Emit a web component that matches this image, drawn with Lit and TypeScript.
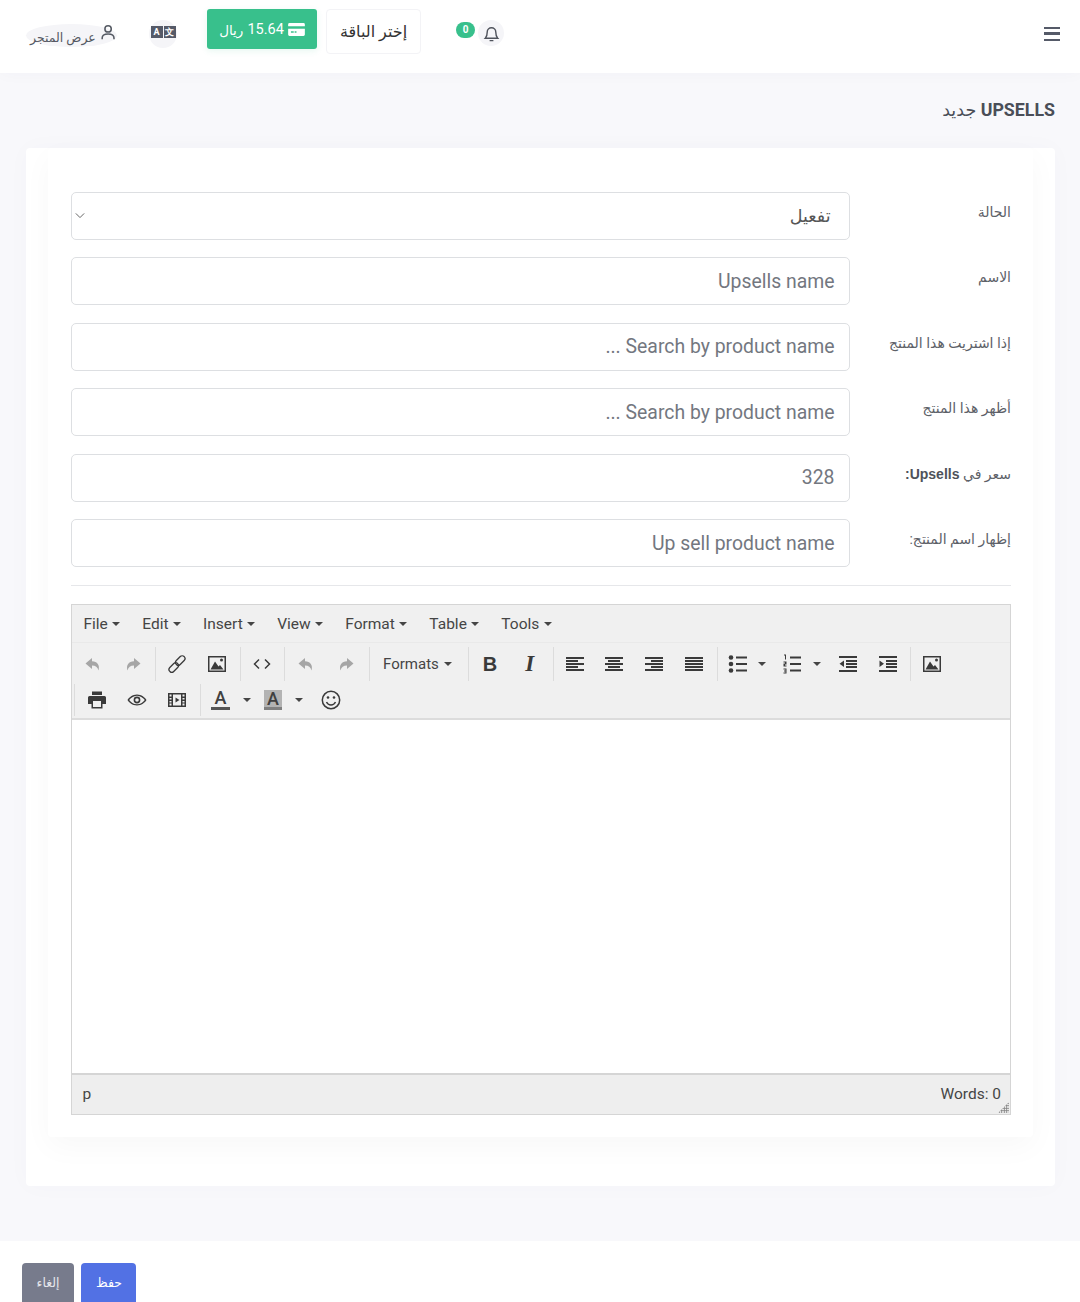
import { LitElement, html, css, svg } from "lit";
import { customElement } from "lit/decorators.js";

const I: Record<string, unknown> = {
  undo: svg`<path d="M9 4 2.5 9.5 9 15v-3.600c3.600 0 5.600 1.500 6.500 5.100 1.600-5.400-1.200-9-6.500-9.200z"/>`,
  redo: svg`<path d="M11 4l6.500 5.500L11 15v-3.600c-3.600 0-5.600 1.500-6.500 5.100C2.900 11.100 5.700 7.500 11 7.300z"/>`,
  link: svg`<g fill="none" stroke="currentColor" stroke-width="1.300"><rect x="10.500" y="1" width="5.500" height="11" rx="2.700" transform="rotate(45 13.250 6.500)"/><rect x="4" y="8" width="5.500" height="11" rx="2.700" transform="rotate(45 6.750 13.500)"/></g>`,
  image: svg`<path fill-rule="evenodd" d="M1 2h18v16H1zm1.500 1.500v13h15v-13z"/><path d="M3.500 15.500 8 7.500l3.500 5 1.500-1.500 3.500 4.500z"/><circle cx="14.500" cy="6" r="1.500"/>`,
  code: svg`<path fill="none" stroke="currentColor" stroke-width="1.500" d="M7 5.500 2.500 10 7 14.500M13 5.500l4.500 4.500-4.500 4.500"/>`,
  left: svg`<path d="M1 3h18v2H1zM1 6h12v2H1zM1 9h18v2H1zM1 12h12v2H1zM1 15h18v2H1z"/>`,
  center: svg`<path d="M1 3h18v2H1zM4 6h12v2H4zM1 9h18v2H1zM4 12h12v2H4zM1 15h18v2H1z"/>`,
  right: svg`<path d="M1 3h18v2H1zM7 6h12v2H7zM1 9h18v2H1zM7 12h12v2H7zM1 15h18v2H1z"/>`,
  justify: svg`<path d="M1 3h18v2H1zM1 6h18v2H1zM1 9h18v2H1zM1 12h18v2H1zM1 15h18v2H1z"/>`,
  bullist: svg`<circle cx="3" cy="3.500" r="2.300"/><circle cx="3" cy="10" r="2.300"/><circle cx="3" cy="16.500" r="2.300"/><path d="M8 2.500h11v2H8zM8 9h11v2H8zM8 15.500h11v2H8z"/>`,
  numlist: svg`<path d="M2 .5h2v5H3V1.500H2zM1.500 7.500h3v3H3v1h1.500v1h-3v-3H3v-1H1.500zM1.500 14.500h3v5h-3v-1H3.500v-1H2v-1h1.500v-1h-2z"/><path d="M8 2.500h11v2H8zM8 9h11v2H8zM8 15.500h11v2H8z"/>`,
  outdent: svg`<path d="M1 2h18v2H1zM8 6h11v2H8zM8 9h11v2H8zM8 12h11v2H8zM1 16h18v2H1zM6 6.500v6.500L1.500 9.800z"/>`,
  indent: svg`<path d="M1 2h18v2H1zM8 6h11v2H8zM8 9h11v2H8zM8 12h11v2H8zM1 16h18v2H1zM1.500 6.500v6.500L6 9.800z"/>`,
  print: svg`<path d="M5 1.500h10V5H5z"/><path fill-rule="evenodd" d="M2.500 6h15A1.500 1.500 0 0 1 19 7.500V14h-3.500v4.500h-11V14H1V7.500A1.500 1.500 0 0 1 2.500 6zM6 11v6h8v-6z"/>`,
  eye: svg`<path fill-rule="evenodd" d="M10 4.500c4.500 0 8 3 9.500 5.500-1.500 2.500-5 5.500-9.500 5.500S2 12.500.5 10C2 7.500 5.500 4.500 10 4.500zM2.200 10c1.500 2 4.300 4.300 7.800 4.300s6.300-2.300 7.800-4.300c-1.500-2-4.300-4.300-7.800-4.300S3.700 8 2.200 10z"/><path fill-rule="evenodd" d="M10 6.600a3.400 3.400 0 1 1 0 6.800 3.400 3.400 0 0 1 0-6.800zm0 1.600a1.800 1.800 0 1 0 0 3.600 1.800 1.800 0 0 0 0-3.600z"/>`,
  film: svg`<path fill-rule="evenodd" d="M1 3h18v14H1zM2.500 4.500v2h2v-2zm0 3.500v1.500h2V8zm0 3v1.500h2V11zm0 2.500v2h2v-2zM6 4.500v11h8v-11zm9.500 0v2h2v-2zm0 3.500v1.500h2V8zm0 3v1.500h2V11zm0 2.500v2h2v-2z"/><path d="M8.500 7.500 12.500 10l-4 2.500z"/>`,
  smile: svg`<g fill="none" stroke="currentColor" stroke-width="1.500"><circle cx="10" cy="10" r="8.700"/><path d="M5.500 12c1 2 2.600 3 4.500 3s3.500-1 4.500-3"/></g><circle cx="7" cy="7.500" r="1.300"/><circle cx="13" cy="7.500" r="1.300"/>`,
};

const ico = (n: string, dim = false) =>
  html`<span class="btn ${dim ? "dim" : ""}"><svg viewBox="0 0 20 20" width="20" height="20" fill="currentColor">${I[n]}</svg></span>`;
const caret = html`<i class="caret"></i>`;
const split = (n: string) =>
  html`<span class="split"><svg viewBox="0 0 20 20" width="20" height="20" fill="currentColor">${I[n]}</svg>${caret}</span>`;

const fields: [unknown, string, boolean][] = [
  ["الاسم", "Upsells name", false],
  ["إذا اشتريت هذا المنتج", "Search by product name ...", false],
  ["أظهر هذا المنتج", "Search by product name ...", false],
  [html`سعر في <b>Upsells:</b>`, "328", true],
  ["إظهار اسم المنتج:", "Up sell product name", false],
];
const menus = ["File", "Edit", "Insert", "View", "Format", "Table", "Tools"];

@customElement("app-root")
export class AppRoot extends LitElement {
  static styles = css`
    :host { display: block; width: 1080px; height: 1302px; overflow: hidden; background: #fff; color: #4a4e57;
      font-family: Roboto, "Noto Sans", "DejaVu Sans", sans-serif; }
    * { box-sizing: border-box; }
    .top { height: 73px; background: #fff; display: flex; justify-content: space-between; padding: 9px 20px 0 26px; position: relative; box-shadow: 0 0 16px rgba(60,60,90,.03); }
    .tl { display: flex; align-items: flex-start; }
    .user { width: 91px; height: 23px; margin-top: 15px; border-radius: 50%; background: #f5f5f8; display: flex; align-items: center; gap: 3px; padding-left: 4px; font-size: 12.500px; color: #555a63; white-space: nowrap; flex: none; }
    .user span { margin-top: 4px; }
    .user svg { margin-top: -6px; }
    .lang { width: 28px; height: 28px; margin: 11px 0 0 32px; background: #f5f5f8; border-radius: 50%; display: flex; align-items: center; justify-content: center; gap: 1px; flex: none; padding-bottom: 4px; }
    .lang b { width: 12px; height: 12px; background: #555a68; color: #fff; font-size: 9px; line-height: 12px; text-align: center; font-weight: 700; flex: none; }
    .credit { width: 110px; height: 40px; margin-left: 30px; border-radius: 3px; background: #38c08c; color: #fff; display: flex; align-items: center; justify-content: center; gap: 4px; font-size: 14.500px; box-shadow: 0 2px 6px rgba(56,192,140,.12); flex: none; }
    .credit .cur { font-size: 13.500px; margin-top: 2px; }
    .plan { width: 95px; height: 45px; margin-left: 9px; background: #fff; border: 1px solid #f3f3f6; border-radius: 4px; display: flex; align-items: center; justify-content: center; font-size: 16px; color: #333; flex: none; }
    .bell { margin: 10px 0 0 35px; width: 48px; height: 28px; position: relative; display: flex; justify-content: flex-end; flex: none; }
    .bell .bg { width: 26px; height: 26px; margin-top: 1px; border-radius: 50%; background: #f5f5f8; display: flex; align-items: center; justify-content: center; }
    .badge { position: absolute; left: 0; top: 3px; width: 19px; height: 16px; border-radius: 9px; background: #38c08c; color: #fff; font-size: 10px; font-weight: 700; text-align: center; line-height: 16px; }
    .ham { width: 16px; height: 14px; margin-top: 18px; border-top: 2.500px solid #555a68; border-bottom: 2.500px solid #555a68; position: relative; }
    .ham::after { content: ""; position: absolute; left: 0; right: 0; top: 3.300px; height: 2.500px; background: #555a68; }
    .main { height: 1168px; background: #f8f8fb; padding: 0 25px 0 26px; }
    h1 { margin: 0; height: 75px; padding-top: 25px; font-size: 17.800px; line-height: 24px; font-weight: 700; color: #4a4e57; direction: rtl; }
    h1 span { font-weight: 400; font-size: 17.500px; }
    .card { height: 1038px; background: #fff; border-radius: 4px; padding: 0 22px; box-shadow: 0 0 24px rgba(80,80,120,.025); }
    .inner { height: 989px; background: #fff; border-radius: 4px; padding: 43.500px 22px 0 22.500px; box-shadow: 0 10px 30px rgba(0,0,0,.03); }
    .row { display: flex; direction: rtl; height: 48px; margin-bottom: 17.500px; }
    .row label { width: 161.500px; flex: none; padding-top: 10px; font-size: 14px; line-height: 20px; color: #5d6168; }
    .row label b { font-family: "Liberation Sans", sans-serif; font-weight: 700; color: #4e525a; }
    .ctl { flex: 1; border: 1px solid #dddfe2; border-radius: 5px; padding: 0 14px; font-size: 19.400px; color: #73777f; background: #fff; font-family: inherit; text-align: right; direction: rtl; outline: none; display: flex; align-items: center; justify-content: space-between; min-width: 0; }
    .ctl::placeholder { color: #73777f; opacity: 1; }
    .sel { color: #555; padding: 0 18px 0 3px; font-size: 17.500px; }
    hr { border: 0; border-top: 1px solid #e6e7ea; margin: 0 0 18.500px; }
    .ed { height: 511px; border: 1px solid #d5d5d5; display: flex; flex-direction: column; font-size: 15px; color: #454545; }
    .menu { height: 38px; background: #f0f0f0; display: flex; align-items: center; padding-left: 12px; gap: 22.200px; border-bottom: 1px solid #e9e9e9; flex: none; font-size: 15.500px; }
    .menu span { display: flex; align-items: center; gap: 4.300px; }
    .caret { display: inline-block; width: 0; height: 0; border: 4px solid transparent; border-top: 4.500px solid #454545; border-bottom: 0; }
    .tools { height: 77px; background: #f0f0f0; border-bottom: 2px solid #dcdcdc; flex: none; padding-top: 2px; }
    .tr { display: flex; height: 38px; align-items: center; padding-left: 1px; }
    .tr.two { height: 33px; padding-left: 2px; }
    .tr.two .g:first-child { padding-left: 3px; }
    .tr.two .g { height: 32px; }
    .g { display: flex; height: 34px; align-items: center; padding: 0 1px; margin-right: 2px; border-left: 1px solid #dcdcdc; }
    .g.first { border-left: 0; margin-right: 1px; }
    .btn { width: 39.800px; height: 32px; display: flex; align-items: center; justify-content: center; color: #3a3a3a; flex: none; }
    .dim { color: #a6a6a6; }
    .fmt { width: 94px; padding-left: 12px; display: flex; gap: 5px; align-items: center; }
    .bt { font-family: "Liberation Sans", sans-serif; font-size: 20px; font-weight: 700; color: #3a3a3a; }
    .it { font-family: "Liberation Serif", serif; font-size: 23px; font-weight: 700; font-style: italic; color: #3a3a3a; }
    .split { display: flex; align-items: center; gap: 10.500px; padding-left: 9px; width: 54.500px; color: #3a3a3a; flex: none; }
    .colA { display: flex; align-items: center; padding-left: 9px; width: 53px; gap: 13px; flex: none; }
    .colA.wide { width: 56px; }
    .a { width: 19px; height: 21px; text-align: center; font-size: 18px; line-height: 18px; color: #404040; border-bottom: 3px solid #555; font-weight: 500; }
    .a.bg { width: 18px; height: 20px; background: #b3b3b3; border-bottom-color: #808080; }
    .body { flex: 1; background: #fff; }
    .status { height: 41px; background: #eee; border-top: 2px solid #d5d5d5; display: flex; align-items: center; justify-content: space-between; padding: 0 9px 2px 11px; position: relative; flex: none; font-size: 15.500px; }
    .grip { position: absolute; right: 1px; bottom: 1px; width: 11px; height: 11px; background-image: radial-gradient(#808080 .9px, transparent 1px); background-size: 2.500px 2.500px; clip-path: polygon(100% 0, 100% 100%, 0 100%); }
    .foot { height: 61px; background: #fff; display: flex; padding: 22px 0 0 22px; gap: 7px; font-size: 12.500px; color: #fff; }
    .foot div { height: 42px; border-radius: 4px; display: flex; align-items: center; justify-content: center; padding-bottom: 3px; }
    .cancel { width: 52px; background: #777b8c; color: #e6e7ec; }
    .save { width: 55px; background: #5271e4; padding-left: 1px; }
  `;

  render() {
    return html`
      <div class="top">
        <div class="tl">
          <div class="user">
            <span>عرض المتجر</span>
            <svg viewBox="0 0 20 20" width="20" height="20" fill="none" stroke="#555a63" stroke-width="1.700"><circle cx="10" cy="5.500" r="3.500"/><path d="M3.500 17v-1.500c0-3 3-4.500 6.500-4.500s6.500 1.500 6.500 4.500V17"/></svg>
          </div>
          <div class="lang"><b>A</b><b>文</b></div>
          <div class="credit">
            <span class="cur">ريال</span>
            <span>15.64</span>
            <svg viewBox="0 0 18 14" width="17" height="13"><path fill="#fff" fill-rule="evenodd" d="M1.500 0h15A1.500 1.500 0 0 1 18 1.500v11a1.500 1.500 0 0 1-1.500 1.500h-15A1.500 1.500 0 0 1 0 12.500v-11A1.500 1.500 0 0 1 1.500 0zM0 3.500v2.800h18V3.500zM3 9v1.500h3V9zm4 0v1.500h2V9z"/></svg>
          </div>
          <div class="plan">إختر الباقة</div>
          <div class="bell">
            <span class="badge">0</span>
            <span class="bg"><svg viewBox="0 0 20 20" width="19" height="19" fill="none" stroke="#4f535c" stroke-width="1.500"><path d="M3.500 15h13c-1.500-1.500-2-3-2-6.500a4.500 4.500 0 0 0-9 0c0 3.500-.5 5-2 6.500zM8 17.500h4"/></svg></span>
          </div>
        </div>
        <div class="ham"></div>
      </div>
      <div class="main">
        <h1>UPSELLS <span>جديد</span></h1>
        <div class="card">
          <div class="inner">
            <div class="row">
              <label>الحالة</label>
              <div class="ctl sel"><span>تفعيل</span>
                <svg viewBox="0 0 12 8" width="10" height="7" fill="none" stroke="#666" stroke-width="1.200"><path d="M1 1.500 6 6.500l5-5"/></svg>
              </div>
            </div>
            ${fields.map(([l, p, v]) => html`
              <div class="row">
                <label>${l}</label>
                ${v ? html`<input class="ctl" .value=${p} />` : html`<input class="ctl" placeholder=${p} />`}
              </div>`)}
            <hr />
            <div class="ed">
              <div class="menu">${menus.map((m) => html`<span>${m}${caret}</span>`)}</div>
              <div class="tools">
                <div class="tr">
                  <div class="g first">${ico("undo", true)}${ico("redo", true)}</div>
                  <div class="g">${ico("link")}${ico("image")}</div>
                  <div class="g">${ico("code")}</div>
                  <div class="g">${ico("undo", true)}${ico("redo", true)}</div>
                  <div class="g"><span class="fmt">Formats${caret}</span></div>
                  <div class="g"><span class="btn bt">B</span><span class="btn it">I</span></div>
                  <div class="g">${ico("left")}${ico("center")}${ico("right")}${ico("justify")}</div>
                  <div class="g">${split("bullist")}${split("numlist")}${ico("outdent")}${ico("indent")}</div>
                  <div class="g">${ico("image")}</div>
                </div>
                <div class="tr two">
                  <div class="g">${ico("print")}${ico("eye")}${ico("film")}</div>
                  <div class="g">
                    <span class="colA"><span class="a">A</span>${caret}</span>
                    <span class="colA wide"><span class="a bg">A</span>${caret}</span>
                    ${ico("smile")}
                  </div>
                </div>
              </div>
              <div class="body"></div>
              <div class="status"><span>p</span><span>Words: 0</span><i class="grip"></i></div>
            </div>
          </div>
        </div>
      </div>
      <div class="foot"><div class="cancel">إلغاء</div><div class="save">حفظ</div></div>
    `;
  }
}
